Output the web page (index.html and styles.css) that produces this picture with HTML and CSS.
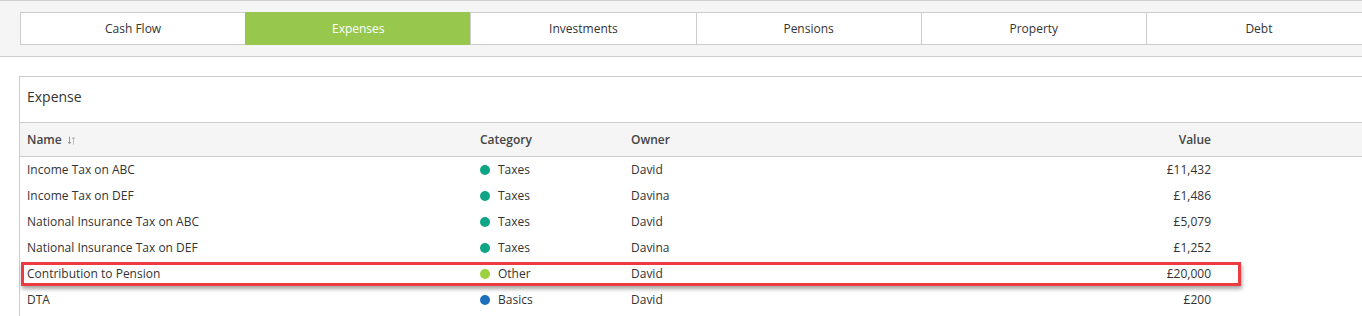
FILE: index.html
```html
<!DOCTYPE html>
<html lang="en">
<head>
    <meta charset="UTF-8">
    <title>Expenses</title>
    <link rel="stylesheet" href="styles.css">
</head>
<body>

    <!-- Tab bar -->
    <div class="topbar">
        <div class="tabs">
            <a class="tab" href="#">Cash Flow</a>
            <a class="tab active" href="#">Expenses</a>
            <a class="tab" href="#">Investments</a>
            <a class="tab" href="#">Pensions</a>
            <a class="tab" href="#">Property</a>
            <a class="tab" href="#">Debt</a>
        </div>
    </div>

    <!-- Expense card -->
    <div class="page">
        <div class="card">
            <div class="card-header">Expense</div>
            <div class="card-body">
                <table class="grid">
                    <colgroup>
                        <col class="c-name">
                        <col class="c-cat">
                        <col class="c-owner">
                        <col class="c-value">
                        <col>
                    </colgroup>
                    <thead>
                        <tr>
                            <th>Name
                                <svg class="sort" width="7" height="9" viewBox="0 0 7 9">
                                    <path d="M1.5 0.5v7M0 6l1.5 1.8L3 6" fill="none" stroke="#999" stroke-width="1"/>
                                    <path d="M5.5 8.5v-7M4 3l1.5-1.8L7 3" fill="none" stroke="#bbb" stroke-width="1"/>
                                </svg>
                            </th>
                            <th>Category</th>
                            <th>Owner</th>
                            <th class="num">Value</th>
                            <th></th>
                        </tr>
                    </thead>
                    <tbody>
                        <tr>
                            <td>Income Tax on ABC</td>
                            <td><span class="dot taxes"></span>Taxes</td>
                            <td>David</td>
                            <td class="num">£11,432</td>
                            <td></td>
                        </tr>
                        <tr>
                            <td>Income Tax on DEF</td>
                            <td><span class="dot taxes"></span>Taxes</td>
                            <td>Davina</td>
                            <td class="num">£1,486</td>
                            <td></td>
                        </tr>
                        <tr>
                            <td>National Insurance Tax on ABC</td>
                            <td><span class="dot taxes"></span>Taxes</td>
                            <td>David</td>
                            <td class="num">£5,079</td>
                            <td></td>
                        </tr>
                        <tr>
                            <td>National Insurance Tax on DEF</td>
                            <td><span class="dot taxes"></span>Taxes</td>
                            <td>Davina</td>
                            <td class="num">£1,252</td>
                            <td></td>
                        </tr>
                        <tr>
                            <td>Contribution to Pension</td>
                            <td><span class="dot other"></span>Other</td>
                            <td>David</td>
                            <td class="num">£20,000</td>
                            <td></td>
                        </tr>
                        <tr>
                            <td>DTA</td>
                            <td><span class="dot basics"></span>Basics</td>
                            <td>David</td>
                            <td class="num">£200</td>
                            <td></td>
                        </tr>
                    </tbody>
                </table>

                <!-- annotation box round the pension row -->
                <div class="highlight"></div>
            </div>
        </div>
    </div>

</body>
</html>
```

FILE: styles.css
```css
* {
    margin: 0;
    padding: 0;
    box-sizing: border-box;
}

html, body {
    overflow: hidden;
}

body {
    font-family: 'Open Sans', 'Liberation Sans', sans-serif;
    font-size: 12px;
    color: #333;
    background: #fff;
    width: 1400px;
}

/* Tab bar */
.topbar {
    background: #f5f5f5;
    border-top: 1px solid #cfcfcf;
    border-bottom: 1px solid #cfcfcf;
    padding: 11px 0 11px 20px;
    height: 57px;
}

.tabs {
    display: flex;
    width: 1352px;
    height: 33px;
    border: 1px solid #cccccc;
    background: #fff;
}

.tab {
    flex: 1;
    display: flex;
    align-items: center;
    justify-content: center;
    color: #333;
    text-decoration: none;
    border-left: 1px solid #cccccc;
}

.tab:first-child {
    border-left: none;
}

.tab.active {
    background: #97c84d;
    color: #fff;
    margin: -1px 0;
    border-left-color: #97c84d;
}

.tab.active + .tab {
    border-left-color: #cccccc;
}

/* Card */
.page {
    padding: 19px 0 0 19px;
}

.card {
    width: 1360px;
    border: 1px solid #cccccc;
    background: #fff;
}

.card-header {
    height: 46px;
    padding: 10px 7px 0;
    font-size: 14px;
    line-height: 20px;
    color: #333;
    border-bottom: 1px solid #cccccc;
}

.card-body {
    position: relative;
    padding-bottom: 30px;
}

.grid {
    width: 100%;
    border-collapse: collapse;
    table-layout: fixed;
}

.c-name { width: 453px; }
.c-cat { width: 151px; }
.c-owner { width: 404px; }
.c-value { width: 190px; }

.grid th {
    background: #f5f5f5;
    height: 33px;
    padding: 0 7px;
    text-align: left;
    font-weight: 600;
    color: #444;
    border-bottom: 1px solid #cccccc;
}

.grid td {
    height: 26px;
    padding: 0 7px;
    white-space: nowrap;
}

.grid .num {
    text-align: right;
}

.sort {
    margin-left: 3px;
    vertical-align: -1px;
}

.dot {
    display: inline-block;
    width: 10px;
    height: 10px;
    border-radius: 50%;
    margin-right: 8px;
    vertical-align: -1px;
}

.dot.taxes { background: #0ea586; }
.dot.other { background: #9bd03f; }
.dot.basics { background: #1c6fbb; }

.highlight {
    position: absolute;
    left: 1px;
    top: 139px;
    width: 1220px;
    height: 24px;
    border: 3px solid #ee3b42;
    box-shadow: 1px 3px 4px rgba(0, 0, 0, 0.35);
    pointer-events: none;
}
```
